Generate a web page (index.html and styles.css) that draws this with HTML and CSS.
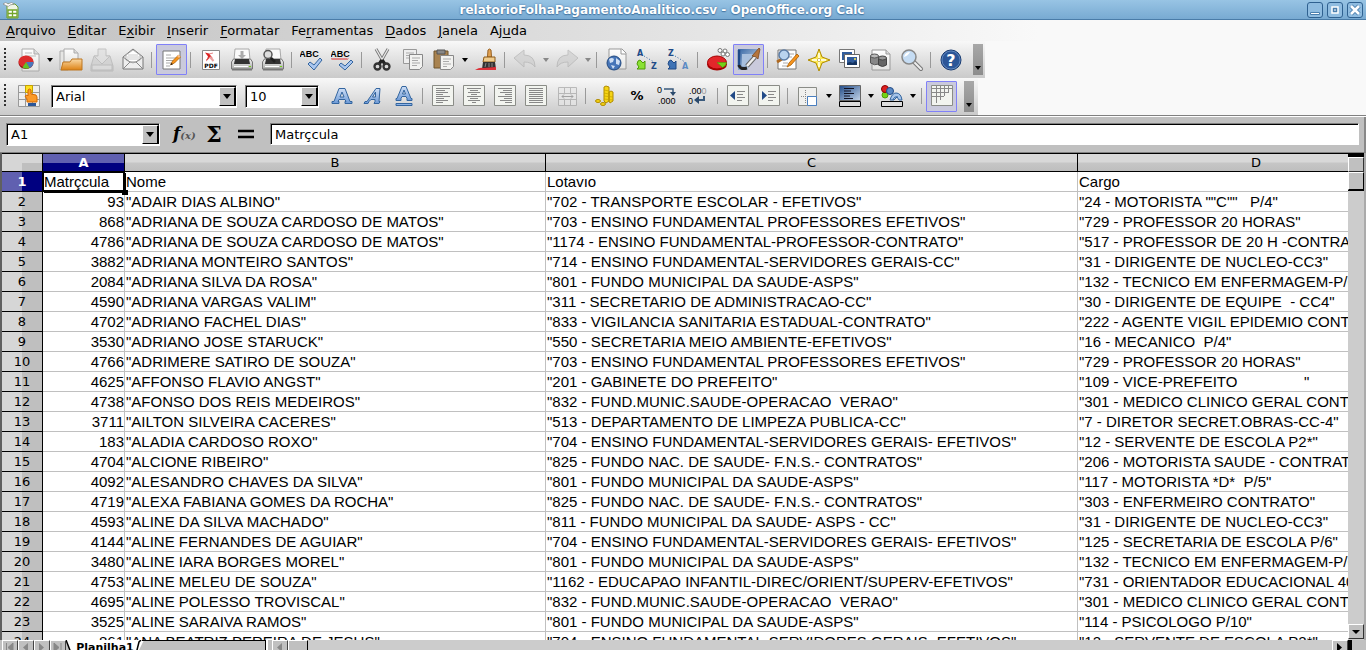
FILE: index.html
```html
<!DOCTYPE html>
<html lang="pt-BR">
<head>
<meta charset="utf-8">
<title>relatorioFolhaPagamentoAnalitico.csv - OpenOffice.org Calc</title>
<link rel="stylesheet" href="styles.css">
</head>
<body>
<svg class="defs" aria-hidden="true">
<defs>
<linearGradient id="blue" x1="0" y1="0" x2="0" y2="1"><stop offset="0" stop-color="#cfdff6"/><stop offset="1" stop-color="#6d9ad6"/></linearGradient>
<linearGradient id="deep" x1="0" y1="0" x2="1" y2="1"><stop offset="0" stop-color="#204a87"/><stop offset="1" stop-color="#c4d5ea"/></linearGradient>
<linearGradient id="side" x1="0" y1="0" x2="1" y2="1"><stop offset="0" stop-color="#3465a4"/><stop offset="1" stop-color="#e4ecf5"/></linearGradient>
<linearGradient id="orange" x1="0" y1="0" x2="0" y2="1"><stop offset="0" stop-color="#f9d9a5"/><stop offset="1" stop-color="#dd8214"/></linearGradient>
<linearGradient id="paper" x1="0" y1="0" x2="0" y2="1"><stop offset="0" stop-color="#fff"/><stop offset="1" stop-color="#e4e4e2"/></linearGradient>
<linearGradient id="metal" x1="0" y1="0" x2="0" y2="1"><stop offset="0" stop-color="#f6f6f6"/><stop offset="1" stop-color="#a9aba8"/></linearGradient>
</defs>
</svg>
<div class="app">
<header class="titlebar">
<svg class="appicon" viewBox="0 0 18 18"><path d="M5 3h8l3 3v11H5z" fill="#eef5e4" stroke="#6c9a2c"/><path d="M6 9h9v7H6zM6 12.500h9M10.500 9v7" fill="#fff" stroke="#73a52b" stroke-width="1.300"/><path d="M1 3q3-3 5 0q4-3 6 0l-4 1q-1 2-3 1z" fill="#fff" stroke="#777" stroke-width=".6"/></svg>
<h1>relatorioFolhaPagamentoAnalitico.csv - OpenOffice.org Calc</h1>
<div class="winbtns">
<button aria-label="Minimizar"><svg viewBox="0 0 14 14"><path d="M2.500 9.500h9v2h-9z" fill="#fff" stroke="#4a7fae"/></svg></button>
<button aria-label="Maximizar"><svg viewBox="0 0 14 14"><path d="M4 4h6v6H4z" fill="#4a7fae" stroke="#fff" stroke-width="1.500"/><path d="M6 6.500h2v1H6z" fill="#fff"/></svg></button>
<button aria-label="Fechar"><svg viewBox="0 0 14 14"><path d="M3 3l8 8M11 3l-8 8" stroke="#4a7fae" stroke-width="4.500"/><path d="M3 3l8 8M11 3l-8 8" stroke="#fff" stroke-width="2.600"/></svg></button>
</div>
</header>
<nav class="menubar">
<button><u>A</u>rquivo</button><button><u>E</u>ditar</button><button>E<u>x</u>ibir</button><button><u>I</u>nserir</button><button><u>F</u>ormatar</button><button>Fe<u>r</u>ramentas</button><button><u>D</u>ados</button><button><u>J</u>anela</button><button>Aj<u>u</u>da</button>
</nav>
<div class="toolbar" role="toolbar" aria-label="Padrão">
<span class="grip"></span>
<button class="tool" aria-label="Novo"><svg viewBox="0 0 24 24"><path d="M5 1h12l5 5v17H5z" fill="url(#paper)" stroke="#aaa"/><path d="M17 1v5h5" fill="#ddd" stroke="#aaa"/><path d="M8 5h7M8 8h11" stroke="#bbb"/><ellipse cx="9" cy="15" rx="7.500" ry="6" fill="#8c1010"/><ellipse cx="9" cy="13.500" rx="7.500" ry="6" fill="#dd2c2c"/><path d="M9 14h7.500q0 4-4 6z" fill="#4b77bb"/><path d="M9 14l3.500 6q-4 1.500-7-.5z" fill="#62c226"/></svg></button><button class="drop" aria-label="Mais opções"></button>
<button class="tool" aria-label="Abrir"><svg viewBox="0 0 24 24"><path d="M1 22V3h6l2 2v17z" fill="#e6e6e4" stroke="#aaa"/><path d="M5 14V1h10l4 4v10z" fill="url(#paper)" stroke="#aaa"/><path d="M15 1v4h4" fill="#ddd" stroke="#aaa"/><path d="M2 22l2-8h7l2-3h10v11z" fill="url(#orange)" stroke="#bd7621"/></svg></button>
<button class="tool dim" aria-label="Salvar"><svg viewBox="0 0 24 24"><path d="M4 8h16l3 10v5H1v-5z" fill="#ccc" stroke="#aaa"/><path d="M2 17h20v5H2z" fill="#ddd" stroke="#aaa"/><path d="M8 1h8v7h4l-8 8-8-8h4z" fill="#ddd" stroke="#aaa"/></svg></button>
<button class="tool" aria-label="E-mail"><svg viewBox="0 0 24 24"><path d="M2 9l10-8 10 8v12H2z" fill="#eee" stroke="#777"/><path d="M5 7l7-5 7 5v5l-7 3-7-3z" fill="#fff" stroke="#999" stroke-width=".7"/><path d="M7 7h10M6 9h12M6 11h12" stroke="#ccc"/><path d="M2 9l7 5h6l7-5M2 21l7-7M22 21l-7-7" fill="none" stroke="#888"/></svg></button>
<span class="sep"></span>
<button class="tool on" aria-label="Editar arquivo"><svg viewBox="0 0 24 24"><path d="M3 3h17v18H3z" fill="#fff" stroke="#777"/><path d="M6 7h5M6 10h11M6 12.500h9M6 15h6M6 18h4" stroke="#aaa"/><path d="M10.500 17l2-4 6-6 2 2-6 6z" fill="#f7941d" stroke="#a65b00" stroke-width=".7"/><path d="M10.500 17l1-2 1.500 1.200z" fill="#111"/><path d="M17 8l2 2 1.500-1.500-2-2z" fill="#f8c08a"/></svg></button>
<span class="sep"></span>
<button class="tool" aria-label="Exportar PDF"><svg viewBox="0 0 24 24"><path d="M3.500 2.500h17v19h-17z" fill="#fff" stroke="#888"/><path d="M6 4.500l4 1 4 5-3-1-4 4 2-5z" fill="#d22"/><path d="M10 6l4-1M7 12l4-3" stroke="#d66" stroke-width=".8"/><path d="M11 9l3.500 4" stroke="#e9a0a0" stroke-width="2"/><text x="12" y="20" class="t-pdf">PDF</text></svg></button>
<button class="tool" aria-label="Imprimir"><svg viewBox="0 0 24 24"><path d="M4 12l1-11h14l1 11z" fill="#fafafa" stroke="#aaa"/><path d="M10.500 3h3v4h2.500l-4 4-4-4h2.500z" fill="#aaa"/><path d="M1.500 14l2-3h17l2 3v7h-21z" fill="url(#metal)" stroke="#777"/><path d="M5 11h14l1 5H4z" fill="#333"/><path d="M4 18h14v1H4z" fill="#fff"/><path d="M19 18h2v1h-2z" fill="#73d216"/><path d="M2 21h20v1.500H2z" fill="#777"/></svg></button>
<button class="tool" aria-label="Visualizar página"><svg viewBox="0 0 24 24"><path d="M4 12l1-11h14l1 11z" fill="#fafafa" stroke="#aaa"/><path d="M1.500 14l2-3h17l2 3v7h-21z" fill="url(#metal)" stroke="#777"/><path d="M5 11h14l1 5H4z" fill="#333"/><path d="M4 18h14v1H4z" fill="#fff"/><path d="M19 18h2v1h-2z" fill="#73d216"/><path d="M2 21h20v1.500H2z" fill="#777"/><path d="M9 9l5 5" stroke="#222" stroke-width="2.500"/><circle cx="7" cy="6.500" r="4" fill="#ddd" stroke="#555" stroke-width="1.500"/></svg></button>
<span class="sep"></span>
<button class="tool" aria-label="Ortografia"><svg viewBox="0 0 24 24"><text x="9" y="9" class="t-abc">ABC</text><path d="M8 16l2-2 4 3 6-7 2 2-8 10z" fill="#a9c6ef" stroke="#33659f"/></svg></button>
<button class="tool" aria-label="Verificação automática"><svg viewBox="0 0 24 24"><text x="9" y="9" class="t-abc">ABC</text><path d="M0 11.500l1-1 1 1 1-1 1 1 1-1 1 1 1-1 1 1 1-1 1 1 1-1 1 1 1-1 1 1 1-1 1 1 1-1" fill="none" stroke="#d11"/><path d="M8 17l2-2 4 3 6-6 2 2-8 8z" fill="#a9c6ef" stroke="#33659f"/></svg></button>
<span class="sep"></span>
<button class="tool" aria-label="Cortar"><svg viewBox="0 0 24 24"><path d="M6 1l8 14M18 1l-8 14" stroke="#777" stroke-width="3"/><path d="M6 1l8 14M18 1l-8 14" stroke="#e8e8e8" stroke-width="1.300"/><path d="M12 12l-3 4M12 12l3 4" stroke="#222" stroke-width="3"/><ellipse cx="7.500" cy="18.500" rx="3" ry="3" fill="none" stroke="#333" stroke-width="2.300"/><ellipse cx="16.500" cy="18.500" rx="3" ry="3" fill="none" stroke="#333" stroke-width="2.300"/></svg></button>
<button class="tool" aria-label="Copiar"><svg viewBox="0 0 24 24"><path d="M2.500 1.500h13v14h-13z" fill="#eee" stroke="#999"/><path d="M5 5h8M5 7.500h6M5 10h3" stroke="#aaa"/><path d="M8.500 6.500h13v12l-3 3h-10z" fill="#f2f2f0" stroke="#888"/><path d="M11 10h8M11 12.500h6M11 15h8M11 17.500h5" stroke="#aaa"/></svg></button>
<button class="tool" aria-label="Colar"><svg viewBox="0 0 24 24"><path d="M2 3h14v17H2z" fill="#a98350" stroke="#6f542c"/><path d="M5 2h8v4H5z" fill="#888" stroke="#555"/><path d="M8.500 7.500h13v11l-3 3h-10z" fill="#f2f2f0" stroke="#888"/><path d="M11 11h8M11 13.500h6M11 16h8M11 18.500h4" stroke="#aaa"/></svg></button><button class="drop" aria-label="Mais opções"></button>
<button class="tool" aria-label="Pincel de estilo"><svg viewBox="0 0 24 24"><path d="M13.500 9l.5-7q1.500-2 3 0l.5 7z" fill="#e2a253" stroke="#966022"/><path d="M10 9h11v5H9z" fill="#f0cd8f" stroke="#8d5a1a"/><path d="M9 14h12l1 7H8z" fill="#333"/><path d="M12 15l-1 4M15 15v4M18 15v4" stroke="#888"/><path d="M1 22q5-3 8-2l13-1v3z" fill="#dc3038"/></svg></button>
<span class="sep"></span>
<button class="tool dim" aria-label="Desfazer"><svg viewBox="0 0 24 24"><path d="M1 10l10-8v5q11 0 11 12q-3-5-11-5v5z" fill="#ccc" stroke="#aaa"/></svg></button><button class="drop off" aria-label="Mais opções"></button>
<button class="tool dim" aria-label="Refazer"><svg viewBox="0 0 24 24"><path d="M23 10L13 2v5q-11 0-11 12q3-5 11-5v5z" fill="#ccc" stroke="#aaa"/></svg></button><button class="drop off" aria-label="Mais opções"></button>
<span class="sep"></span>
<button class="tool" aria-label="Hiperlink"><svg viewBox="0 0 24 24"><path d="M4 1h13l4 4v16H4z" fill="url(#paper)" stroke="#999"/><path d="M16 1v5h5" fill="#fff" stroke="#999"/><circle cx="9" cy="15" r="7" fill="#4675b8" stroke="#22497f"/><path d="M4 11q3-2 5 0l-1 3-3 1zM11 10l4 3-1 4-3-1zM6 17l4 1-2 3z" fill="#cfdff4"/></svg></button>
<button class="tool" aria-label="Ordem crescente"><svg viewBox="0 0 24 24"><text x="4" y="7.500" class="t-sort">A</text><text x="18" y="21" class="t-sort">Z</text><path d="M8 8l10 6" stroke="#3465a4" stroke-dasharray="1 2"/><path d="M2 13l2-1 3 3 2-2v8H1l2-2-2-3z" fill="#8ae234" stroke="#4e9a06"/></svg></button>
<button class="tool" aria-label="Ordem decrescente"><svg viewBox="0 0 24 24"><text x="4" y="7.500" class="t-sort">Z</text><text x="18" y="21" class="t-sort pale">A</text><path d="M8 8l10 6" stroke="#3465a4" stroke-dasharray="1 2"/><path d="M2 13l2-1 3 3 2-2v8H1l2-2-2-3z" fill="#3f73b5" stroke="#204a87"/></svg></button>
<span class="sep"></span>
<button class="tool" aria-label="Gráfico"><svg viewBox="0 0 24 24"><ellipse cx="11" cy="16.500" rx="10" ry="6" fill="#a40000"/><ellipse cx="11" cy="14.500" rx="9.500" ry="6.500" fill="#e3262a" stroke="#a40000"/><path d="M11 14.500h9.500q0 3-4 5z" fill="#73d216" stroke="#4e9a06" stroke-width=".6"/><g fill="#fff" stroke="#777"><circle cx="14" cy="2.500" r="2"/><circle cx="19" cy="3" r="2"/><circle cx="17" cy="6" r="2"/><circle cx="21.500" cy="6.500" r="2"/></g></svg></button>
<button class="tool on" aria-label="Mostrar funções de desenho"><svg viewBox="0 0 24 24"><path d="M1 1h22L10 22H1z" fill="url(#side)"/><path d="M5 6h14L7 18H5z" fill="#a9c0de"/><path d="M2 2v17" stroke="#204a87" stroke-width="2.500"/><path d="M2 17q1 5 8 3" fill="none" stroke="#222" stroke-width="3"/><path d="M10 18l8-9" stroke="#666" stroke-width="4.500"/><path d="M10 18l8-9" stroke="#eee" stroke-width="2.500"/><path d="M15 8L22 0l1 1-2 10q-2-3-6-3z" fill="#b5753c" stroke="#764012" stroke-width=".7"/></svg></button>
<span class="sep"></span>
<button class="tool" aria-label="Localizar"><svg viewBox="0 0 24 24"><path d="M2 2h18v19H2z" fill="#fff" stroke="#777"/><path d="M12 6h6M12 9h4M7 15h5M6 18h5" stroke="#aaa"/><path d="M1 14l5-3" stroke="#b06a20" stroke-width="3"/><circle cx="8" cy="7" r="5" fill="#b9d3ee" stroke="#5c7ca5" stroke-width="1.500"/><path d="M11 19l2-4 8-9 2 2-8 9z" fill="#f7941d" stroke="#a65b00" stroke-width=".8"/></svg></button>
<button class="tool" aria-label="Navegador"><svg viewBox="0 0 24 24"><path d="M12 1l3 8 8 3-8 3-3 8-3-8-8-3 8-3z" fill="#fce94f" stroke="#b08b00" stroke-linejoin="round"/><path d="M12 5v14M5 12h14" stroke="#fffbd0" stroke-width="2"/><path d="M12 10l2 2-2 2-2-2z" fill="#fff" stroke="#b08b00" stroke-width=".6"/></svg></button>
<button class="tool" aria-label="Galeria"><svg viewBox="0 0 24 24"><path d="M1.500 1.500h15v13h-15z" fill="#fff" stroke="#777"/><path d="M4 4h10v8H4z" fill="#315c9b"/><path d="M6.500 6.500h15v13h-15z" fill="#fff" stroke="#666"/><path d="M9 9h10v8H9z" fill="#315c9b"/><path d="M9 15l3-1 3 1 2-2 2 1v3H9z" fill="#153461"/><circle cx="17" cy="11" r="1" fill="#fce94f"/></svg></button>
<button class="tool" aria-label="Fontes de dados"><svg viewBox="0 0 24 24"><path d="M3 2h14l4 4v16H3z" fill="url(#paper)" stroke="#999"/><path d="M17 2v4h4" fill="#ddd" stroke="#999"/><path d="M1.500 8v7q4 3 8 1V8z" fill="#888" stroke="#555"/><ellipse cx="5.500" cy="8" rx="4" ry="2" fill="#bbb" stroke="#555"/><path d="M9.500 10v7q4 3 8 0v-7z" fill="#666" stroke="#444"/><ellipse cx="13.500" cy="10" rx="4" ry="2" fill="#999" stroke="#444"/></svg></button>
<button class="tool" aria-label="Zoom"><svg viewBox="0 0 24 24"><path d="M14 14l7 7" stroke="#777" stroke-width="4" stroke-linecap="round"/><path d="M14 14l7 7" stroke="#eee" stroke-width="2" stroke-linecap="round"/><circle cx="9" cy="9" r="7" fill="#c5dcf3" stroke="#888" stroke-width="1.500"/><path d="M4 9q1-5 6-5q-2 4-6 5z" fill="#fff"/></svg></button>
<span class="sep"></span>
<button class="tool" aria-label="Ajuda"><svg viewBox="0 0 24 24"><circle cx="12" cy="12" r="10" fill="#2c5698" stroke="#173a70"/><circle cx="12" cy="12" r="9" fill="none" stroke="#6f93c7" stroke-width=".8"/><text x="12" y="18" class="t-help">?</text></svg></button>
<button class="more" aria-label="Mais botões"></button>
</div>
<div class="toolbar fmt" role="toolbar" aria-label="Formatação">
<span class="grip"></span>
<button class="tool" aria-label="Estilos"><svg viewBox="0 0 24 24"><path d="M1.500 1.500h21v21h-21zM1.500 8.500h21M1.500 15.500h21M8.500 1.500v21M15.500 1.500v21" fill="#eee" stroke="#999"/><path d="M8.500 1.500h7v7h-7z" fill="#fce020" stroke="#c4a000"/><path d="M10 18v-3l-2-3 2-1 1 1V6q1.500-2 3 0v4l5 1 1 2v5z" fill="#fb9a28" stroke="#d66a00"/><path d="M11 19h8v3h-8z" fill="#2c5698"/></svg></button>
<label class="combo font"><select aria-label="Nome da fonte"><option>Arial</option></select><span class="arrow"></span></label>
<label class="combo size"><select aria-label="Tamanho da fonte"><option>10</option></select><span class="arrow"></span></label>
<button class="tool" aria-label="Negrito"><svg viewBox="0 0 24 24"><path d="M2 19.500v-2h2l5-13h6l5 13h2v2h-7v-2h1l-1-2H9l-1 2h1v2zM10 13h4l-2-5z" fill="url(#blue)" stroke="#33659f" fill-rule="evenodd"/></svg></button>
<button class="tool" aria-label="Itálico"><svg viewBox="0 0 24 24"><path d="M3 19.500l1-2h2l9-13h4l-1 13h1l-1 2h-5l1-2v-2h-4l-2 2-1 2zM11.500 13h3V8z" fill="url(#blue)" stroke="#33659f" fill-rule="evenodd"/></svg></button>
<button class="tool" aria-label="Sublinhado"><svg viewBox="0 0 24 24"><path d="M4 16.500v-2h1l5-12h4l5 12h1v2h-5v-2l-1-2h-4l-1 2v2zM10.500 10h3l-1.500-4z" fill="url(#blue)" stroke="#33659f" fill-rule="evenodd"/><path d="M4 19.500h16v2H4z" fill="#8db3e6" stroke="#33659f"/></svg></button>
<span class="sep"></span>
<button class="tool" aria-label="Alinhar à esquerda"><svg viewBox="0 0 24 24"><path d="M1.500 1.500h21v20h-21z" fill="#f2f4ef" stroke="#8a8c87"/><path d="M5 4.500h14M5 6.500h9M5 8.500h12M5 10.500h7M5 12.500h14M5 14.500h8M5 16.500h12M5 18.500h7" stroke="#888"/></svg></button>
<button class="tool" aria-label="Centralizar"><svg viewBox="0 0 24 24"><path d="M1.500 1.500h21v20h-21z" fill="#f2f4ef" stroke="#8a8c87"/><path d="M5 4.500h14M8 6.500h8M6 8.500h12M9 10.500h6M5 12.500h14M8 14.500h8M6 16.500h12M10 18.500h4" stroke="#888"/></svg></button>
<button class="tool" aria-label="Alinhar à direita"><svg viewBox="0 0 24 24"><path d="M1.500 1.500h21v20h-21z" fill="#f2f4ef" stroke="#8a8c87"/><path d="M5 4.500h14M10 6.500h9M7 8.500h12M12 10.500h7M5 12.500h14M11 14.500h8M7 16.500h12M12 18.500h7" stroke="#888"/></svg></button>
<button class="tool" aria-label="Justificar"><svg viewBox="0 0 24 24"><path d="M1.500 1.500h21v20h-21z" fill="#f2f4ef" stroke="#8a8c87"/><path d="M5 4.500h14M5 6.500h14M5 8.500h14M5 10.500h14M5 12.500h14M5 14.500h14M5 16.500h14M5 18.500h14" stroke="#888"/></svg></button>
<button class="tool dim" aria-label="Mesclar células"><svg viewBox="0 0 24 24"><path d="M3.500 3.500h18v18h-18zM3.500 9.500h18M3.500 15.500h18M9.500 3.500v6M15.500 3.500v6M9.500 15.500v6M15.500 15.500v6" fill="#e8e8e8" stroke="#999"/><path d="M7 12.500h11M9 10.500l-2 2 2 2M16 10.500l2 2-2 2" fill="none" stroke="#777"/></svg></button>
<span class="sep"></span>
<button class="tool" aria-label="Moeda"><svg viewBox="0 0 24 24"><path d="M10 3l2-1 3 1v14l-3 2-2-2zM15 8l2-1 2 1v9l-3 2-1-2z" fill="#f5d415" stroke="#b08b00"/><path d="M10 6l5 1M10 9l5 1M10 12l9 1M10 15l9 1" stroke="#c4a000" stroke-width=".7"/><g fill="#f5d415" stroke="#b08b00"><ellipse cx="4" cy="17" rx="2.500" ry="1.500"/><ellipse cx="9" cy="20" rx="2.500" ry="1.500"/></g></svg></button>
<button class="tool" aria-label="Porcentagem"><svg viewBox="0 0 24 24"><text x="12" y="16" class="t-pct">%</text></svg></button>
<button class="tool" aria-label="Adicionar casa decimal"><svg viewBox="0 0 24 24"><text x="1" y="9" class="t-num">0</text><text x="2" y="20" class="t-num">.000</text><path d="M8 5h9v4" fill="none" stroke="#3a5a7c" stroke-width="1.500"/><path d="M14 8h6l-3 4z" fill="#2b4a6c"/></svg></button>
<button class="tool" aria-label="Excluir casa decimal"><svg viewBox="0 0 24 24"><text x="2" y="10" class="t-num">.00<tspan fill="#999">0</tspan></text><text x="1" y="20" class="t-num">0</text><path d="M10 16h7v-4" fill="none" stroke="#3a5a7c" stroke-width="2"/><path d="M12 12v8l-5-4z" fill="#2b4a6c"/></svg></button>
<span class="sep"></span>
<button class="tool" aria-label="Diminuir recuo"><svg viewBox="0 0 24 24"><path d="M1.500 1.500h21v20h-21z" fill="#f2f4ef" stroke="#8a8c87"/><path d="M9 7v9l-5-4.500z" fill="#204a87"/><path d="M11 7.500h8M11 10.500h6M11 13.500h8M11 16.500h5" stroke="#888"/></svg></button>
<button class="tool" aria-label="Aumentar recuo"><svg viewBox="0 0 24 24"><path d="M1.500 1.500h21v20h-21z" fill="#f2f4ef" stroke="#8a8c87"/><path d="M5 7v9l5-4.500z" fill="#204a87"/><path d="M11 7.500h8M11 10.500h6M11 13.500h8M11 16.500h5" stroke="#888"/></svg></button>
<span class="sep"></span>
<button class="tool" aria-label="Bordas"><svg viewBox="0 0 24 24"><path d="M2.500 3.500h18v18h-18z" fill="#f0f0ee" stroke="#8a8c87"/><path d="M9.500 6v13M5 12.500h14" stroke="#888" stroke-dasharray="1 1"/><path d="M11.500 12.500h9v9h-9z" fill="#fff" stroke="#4a7fc0"/></svg></button><button class="drop" aria-label="Mais opções"></button>
<button class="tool" aria-label="Cor do plano de fundo"><svg viewBox="0 0 24 24"><path d="M1.500 1.500h21v15h-21z" fill="url(#deep)" stroke="#666"/><path d="M6 4.500h10M6 7h7M6 9.500h10M6 12h6M6 14.500h9" stroke="#112"/><path d="M1.500 17.500h21v5h-21z" fill="#ddd" stroke="#000"/></svg></button><button class="drop" aria-label="Mais opções"></button>
<button class="tool" aria-label="Cor da fonte"><svg viewBox="0 0 24 24"><circle cx="5" cy="11" r="3" fill="#73d216" stroke="#4e9a06"/><circle cx="5" cy="5" r="3.500" fill="#dc2020" stroke="#8a0000"/><circle cx="10" cy="7" r="3.500" fill="#5b8ac4" stroke="#204a87"/><path d="M10 16q2-7 6-7q5 0 6 7h-3l-2-3-3 3z" fill="#a6c4e9" stroke="#33659f"/><path d="M13 16q1-4 5-3" fill="none" stroke="#33659f"/><path d="M1.500 17.500h21v5h-21z" fill="#ddd" stroke="#000"/></svg></button><button class="drop" aria-label="Mais opções"></button>
<span class="sep"></span>
<button class="tool on" aria-label="Linhas de grade"><svg viewBox="0 0 24 24"><path d="M1.500 1.500h21v20h-21z" fill="#f2f4ef" stroke="#8a8c87"/><path d="M2 4.500h20M2 8.500h17M2 12.500h12M6.500 2v17M10.500 2v14M14.500 2v10M18.500 2v6" stroke="#888"/></svg></button>
<button class="more" aria-label="Mais botões"></button>
</div>
<div class="formulabar">
<label class="combo name"><input type="text" value="A1" aria-label="Caixa de nome"><span class="arrow"></span></label>
<button class="fx" aria-label="Assistente de funções"><i>f</i><small>(x)</small></button>
<button class="sum" aria-label="Soma">Σ</button>
<button class="eq" aria-label="Função"><svg viewBox="0 0 18 10"><path d="M1 2h16M1 8h16" stroke="#000" stroke-width="2.400"/></svg></button>
<input class="line" type="text" value="Matrçcula" aria-label="Linha de entrada">
</div>
<main class="work">
<div class="grid">
<table>
<colgroup><col class="ch"><col class="ca"><col class="cb"><col class="cc"><col class="cd"></colgroup>
<thead><tr><th class="corner"></th><th class="sel">A</th><th>B</th><th>C</th><th>D</th></tr></thead>
<tbody>
<tr class="first"><th class="sel">1</th><td class="active">Matrçcula</td><td>Nome</td><td>Lotavıo</td><td>Cargo</td></tr>
<tr><th>2</th><td>93</td><td>"ADAIR DIAS ALBINO"</td><td>"702 - TRANSPORTE ESCOLAR - EFETIVOS"</td><td>"24 - MOTORISTA ""C""   P/4"</td></tr>
<tr><th>3</th><td>868</td><td>"ADRIANA DE SOUZA CARDOSO DE MATOS"</td><td>"703 - ENSINO FUNDAMENTAL PROFESSORES EFETIVOS"</td><td>"729 - PROFESSOR 20 HORAS"</td></tr>
<tr><th>4</th><td>4786</td><td>"ADRIANA DE SOUZA CARDOSO DE MATOS"</td><td>"1174 - ENSINO FUNDAMENTAL-PROFESSOR-CONTRATO"</td><td>"517 - PROFESSOR DE 20 H -CONTRATO"</td></tr>
<tr><th>5</th><td>3882</td><td>"ADRIANA MONTEIRO SANTOS"</td><td>"714 - ENSINO FUNDAMENTAL-SERVIDORES GERAIS-CC"</td><td>"31 - DIRIGENTE DE NUCLEO-CC3"</td></tr>
<tr><th>6</th><td>2084</td><td>"ADRIANA SILVA DA ROSA"</td><td>"801 - FUNDO MUNICIPAL DA SAUDE-ASPS"</td><td>"132 - TECNICO EM ENFERMAGEM-P/6"</td></tr>
<tr><th>7</th><td>4590</td><td>"ADRIANA VARGAS VALIM"</td><td>"311 - SECRETARIO DE ADMINISTRACAO-CC"</td><td>"30 - DIRIGENTE DE EQUIPE  - CC4"</td></tr>
<tr><th>8</th><td>4702</td><td>"ADRIANO FACHEL DIAS"</td><td>"833 - VIGILANCIA SANITARIA ESTADUAL-CONTRATO"</td><td>"222 - AGENTE VIGIL EPIDEMIO CONTRATO"</td></tr>
<tr><th>9</th><td>3530</td><td>"ADRIANO JOSE STARUCK"</td><td>"550 - SECRETARIA MEIO AMBIENTE-EFETIVOS"</td><td>"16 - MECANICO  P/4"</td></tr>
<tr><th>10</th><td>4766</td><td>"ADRIMERE SATIRO DE SOUZA"</td><td>"703 - ENSINO FUNDAMENTAL PROFESSORES EFETIVOS"</td><td>"729 - PROFESSOR 20 HORAS"</td></tr>
<tr><th>11</th><td>4625</td><td>"AFFONSO FLAVIO ANGST"</td><td>"201 - GABINETE DO PREFEITO"</td><td>"109 - VICE-PREFEITO                "</td></tr>
<tr><th>12</th><td>4738</td><td>"AFONSO DOS REIS MEDEIROS"</td><td>"832 - FUND.MUNIC.SAUDE-OPERACAO  VERAO"</td><td>"301 - MEDICO CLINICO GERAL CONTRATO"</td></tr>
<tr><th>13</th><td>3711</td><td>"AILTON SILVEIRA CACERES"</td><td>"513 - DEPARTAMENTO DE LIMPEZA PUBLICA-CC"</td><td>"7 - DIRETOR SECRET.OBRAS-CC-4"</td></tr>
<tr><th>14</th><td>183</td><td>"ALADIA CARDOSO ROXO"</td><td>"704 - ENSINO FUNDAMENTAL-SERVIDORES GERAIS- EFETIVOS"</td><td>"12 - SERVENTE DE ESCOLA P2*"</td></tr>
<tr><th>15</th><td>4704</td><td>"ALCIONE RIBEIRO"</td><td>"825 - FUNDO NAC. DE SAUDE- F.N.S.- CONTRATOS"</td><td>"206 - MOTORISTA SAUDE - CONTRATO"</td></tr>
<tr><th>16</th><td>4092</td><td>"ALESANDRO CHAVES DA SILVA"</td><td>"801 - FUNDO MUNICIPAL DA SAUDE-ASPS"</td><td>"117 - MOTORISTA *D*  P/5"</td></tr>
<tr><th>17</th><td>4719</td><td>"ALEXA FABIANA GOMES DA ROCHA"</td><td>"825 - FUNDO NAC. DE SAUDE- F.N.S.- CONTRATOS"</td><td>"303 - ENFERMEIRO CONTRATO"</td></tr>
<tr><th>18</th><td>4593</td><td>"ALINE DA SILVA MACHADO"</td><td>"811 - FUNDO MUNICIPAL DA SAUDE- ASPS - CC"</td><td>"31 - DIRIGENTE DE NUCLEO-CC3"</td></tr>
<tr><th>19</th><td>4144</td><td>"ALINE FERNANDES DE AGUIAR"</td><td>"704 - ENSINO FUNDAMENTAL-SERVIDORES GERAIS- EFETIVOS"</td><td>"125 - SECRETARIA DE ESCOLA P/6"</td></tr>
<tr><th>20</th><td>3480</td><td>"ALINE IARA BORGES MOREL"</td><td>"801 - FUNDO MUNICIPAL DA SAUDE-ASPS"</td><td>"132 - TECNICO EM ENFERMAGEM-P/6"</td></tr>
<tr><th>21</th><td>4753</td><td>"ALINE MELEU DE SOUZA"</td><td>"1162 - EDUCAPAO INFANTIL-DIREC/ORIENT/SUPERV-EFETIVOS"</td><td>"731 - ORIENTADOR EDUCACIONAL 40 H"</td></tr>
<tr><th>22</th><td>4695</td><td>"ALINE POLESSO TROVISCAL"</td><td>"832 - FUND.MUNIC.SAUDE-OPERACAO  VERAO"</td><td>"301 - MEDICO CLINICO GERAL CONTRATO"</td></tr>
<tr><th>23</th><td>3525</td><td>"ALINE SARAIVA RAMOS"</td><td>"801 - FUNDO MUNICIPAL DA SAUDE-ASPS"</td><td>"114 - PSICOLOGO P/10"</td></tr>
<tr><th>24</th><td>861</td><td>"ANA BEATRIZ PEREIRA DE JESUS"</td><td>"704 - ENSINO FUNDAMENTAL-SERVIDORES GERAIS- EFETIVOS"</td><td>"12 - SERVENTE DE ESCOLA P2*"</td></tr>
</tbody>
</table>
</div>
<div class="vscroll"><button class="sb up" aria-label="Rolar para cima"></button><span class="thumb"></span><button class="sb down" aria-label="Rolar para baixo"></button></div>
</main>
<footer class="tabs">
<button class="nav" aria-label="Primeira planilha"><svg viewBox="0 0 13 14"><path d="M3.500 2v9M10 2v9L5 6.500z" stroke="#888" fill="#888"/></svg></button>
<button class="nav" aria-label="Planilha anterior"><svg viewBox="0 0 13 14"><path d="M9 2v9L4 6.500z" fill="#888"/></svg></button>
<button class="nav" aria-label="Próxima planilha"><svg viewBox="0 0 13 14"><path d="M4 2v9l5-4.500z" fill="#888"/></svg></button>
<button class="nav" aria-label="Última planilha"><svg viewBox="0 0 13 14"><path d="M3 2v9l5-4.500zM10 2v9" stroke="#888" fill="#888"/></svg></button>
<button class="tab"><svg viewBox="0 0 78 18"><path d="M0 0l7 18h62l9-18z" fill="#fff"/><path d="M0 0l7 18M69 18l4-16 2-2" fill="none" stroke="#000" stroke-width="1.500"/></svg><b>Planilha1</b></button>
<span class="rest"></span>
<span class="split"></span>
<button class="nav" aria-label="Rolar para a esquerda"><svg viewBox="0 0 13 14"><path d="M9 2v9L4 6.500z" fill="#888"/></svg></button>
<span class="hthumb"></span>
<span class="track"></span>
<button class="nav" aria-label="Rolar para a direita"><svg viewBox="0 0 13 14"><path d="M4 2v9l5-4.500z" fill="#000"/></svg></button>
<span class="end"></span>
</footer>
</div>
</body>
</html>
```
FILE: styles.css
```css
* { box-sizing: border-box; }
body { margin: 0; background: #c0c0c0; color: #000; font: 13px "DejaVu Sans", sans-serif; }
button, input, select { margin: 0; padding: 0; border: 0; border-radius: 0; background: none; color: inherit; font: inherit; }
.defs { position: absolute; width: 0; height: 0; }
.app { display: flex; flex-direction: column; height: 100vh; overflow: hidden; }

.titlebar { display: grid; grid-template-columns: 20px 1fr 62px; align-items: center; flex: none; height: 20px; background: linear-gradient(#98c4e4, #78aad2); border-bottom: 1px solid #4a7ca8; }
.titlebar h1 { margin: 0; color: #fff; font-size: 12px; font-weight: bold; line-height: 18px; text-align: center; white-space: nowrap; text-shadow: 0 0 2px #3c6c9c, 0 1px 1px #4a7ca8; }
.appicon { width: 18px; height: 18px; margin-left: 2px; }
.winbtns { display: flex; gap: 4px; padding-left: 3px; }
.winbtns button { width: 16px; height: 16px; border: 1px solid #2f6190; border-radius: 3px; background: #8fbce0; }
.winbtns svg { display: block; width: 14px; height: 14px; }

.menubar { display: flex; gap: 12px; flex: none; height: 21px; padding-left: 6px; background: linear-gradient(90deg, #c2c2c2, #e0e0e0 45%, #f9f9f9 76%); }
.menubar button { line-height: 21px; }
.menubar u { text-underline-offset: 2px; }

.toolbar { display: flex; align-items: center; flex: none; height: 37px; background: linear-gradient(#f8f8f8, #cacaca) 0 0 / 985px 100% no-repeat #f9f9f9; }
.fmt { height: 39px; padding-bottom: 2px; background: linear-gradient(#f8f8f8, #cacaca) 0 0 / 978px 37px no-repeat #f9f9f9; border-bottom: 1px solid #fff; box-shadow: inset 0 -1px #808080; }
.grip { flex: none; width: 2px; height: 24px; margin: 0 7px 0 4px; background: repeating-linear-gradient(#333 0 2px, transparent 2px 4px); }
.tool { display: grid; place-items: center; flex: none; width: 31px; height: 31px; }
.tool svg { width: 24px; height: 24px; }
.tool.on { border: 1px solid #8080f8; border-radius: 1px; background: #cacadc; }
.dim { opacity: .6; }
.drop { flex: none; width: 11px; height: 24px; }
.drop::before, .arrow::before, .more::before, .sb::before { content: ""; display: block; width: 0; margin: 0 auto; border: 3px solid transparent; border-top: 4px solid #000; border-bottom: 0; }
.drop.off::before { border-top-color: #888; }
.sep { flex: none; width: 8px; height: 16px; background: linear-gradient(#999, #999) 3px 0 / 1px 100% no-repeat; }
.more { display: flex; align-items: flex-end; flex: none; width: 10px; height: 31px; margin-left: 7px; padding: 0 2px 5px; background: linear-gradient(#a8a8a8, #8c8c8c); }

.combo { display: flex; flex: none; height: 23px; border: 1px solid #808080; border-right-color: #fff; border-bottom-color: #fff; background: #fff; box-shadow: inset 1px 1px #000; padding: 1px 0 1px 4px; }
.combo select, .combo input { flex: 1; min-width: 0; appearance: none; outline: 0; }
.arrow { display: grid; align-items: center; width: 17px; border: 1px solid #fff; border-right: 2px solid #000; border-bottom-color: #000; background: #c0c0c0; }
.arrow::before { border-width: 5px 4px 0; }
.font { width: 186px; margin-left: 7px; }
.size { width: 74px; margin: 0 7px 0 8px; }
.name { width: 154px; }

.formulabar { display: flex; align-items: center; flex: none; height: 36px; padding: 0 5px 1px 6px; background: #c0c0c0; border-right: 2px solid #888; border-bottom: 1px solid #808080; }
.fx { display: flex; align-items: baseline; width: 22px; margin-left: 13px; font-family: "DejaVu Serif", serif; font-size: 17px; font-weight: bold; line-height: 24px; }
.fx small { color: #555; font-size: 10px; font-style: italic; }
.sum { width: 18px; margin-left: 10px; font-family: "DejaVu Serif", serif; font-size: 22px; font-weight: bold; line-height: 24px; }
.eq { width: 18px; margin: 0 15px 0 14px; }
.eq svg { display: block; width: 18px; height: 10px; }
.line { flex: 1; min-width: 0; height: 22px; padding-left: 4px; border: 1px solid #808080; border-right-color: #fff; border-bottom-color: #fff; outline: 0; background: #fff; box-shadow: inset 0 1px #000, inset 1px 0 #000; }

.work { display: flex; flex: 1; min-height: 0; border-left: 2px solid #606060; border-right: 2px solid #aaa; background: #ccc; }
.grid { flex: 1; min-width: 0; overflow: hidden; background: #fff; }
table { width: 1433px; border-spacing: 0; table-layout: fixed; }
.ch { width: 41px; }
.ca { width: 82px; }
.cb { width: 421px; }
.cc { width: 532px; }
.cd { width: 357px; }
th, td { height: 20px; padding: 0; overflow: hidden; white-space: pre; line-height: 19px; }
th { border-right: 1px solid #000; border-bottom: 1px solid #000; background: linear-gradient(90deg, #d6d6d6 20px, #bfbfbf 20px); font-weight: normal; }
thead th { height: 19px; border-top: 1px solid #000; line-height: 17px; background: linear-gradient(#d8d8d8 8px, #c6c6c6 9px, #bebebe); }
thead .corner { background: linear-gradient(#bfbfbf, #bfbfbf) 20px 9px no-repeat #d6d6d6; }
th.sel { color: #fff; font-weight: bold; background: linear-gradient(90deg, #6060b0 20px, #000080 20px); }
thead th.sel { background: linear-gradient(#6060b0 9px, #000080 9px); }
td { padding-left: 1px; border-right: 1px solid #c0c0c0; border-bottom: 1px solid #c0c0c0; font-family: "Liberation Sans", Arial, sans-serif; font-size: 15px; }
td:nth-child(2) { text-align: right; }
.first td:nth-child(2) { position: relative; overflow: visible; text-align: left; box-shadow: inset 0 0 0 1px #000, 1px 1px #000; border-color: #000; }
.active::after { content: ""; position: absolute; right: -4px; bottom: -4px; width: 6px; height: 5px; background: #000; }

.vscroll { display: flex; flex-direction: column; width: 16px; padding-bottom: 1px; border-top: 4px solid #000; background: #ccc; }
.sb { flex: none; height: 15px; border: 1px solid #fff; border-right-color: #333; border-bottom-color: #333; background: #c0c0c0; }
.sb::before { border-width: 4px 4px 0; }
.up::before { border-width: 0 4px 4px; border-bottom-color: #777; }
.thumb { height: 18px; border: 1px solid #fff; border-right-color: #000; border-bottom-color: #000; box-shadow: 0 1px #000; background: #c0c0c0; }
.down { margin-top: auto; }

.tabs { display: flex; flex: none; height: 10px; padding-left: 2px; overflow: hidden; background: #c0c0c0; }
.nav { flex: none; width: 16px; height: 16px; border: 1px solid #fff; border-right-color: #444; background: #c0c0c0; }
.nav svg { display: block; width: 13px; height: 14px; }
.tab { display: grid; flex: none; width: 76px; height: 18px; }
.tab svg, .tab b { grid-area: 1 / 1; width: 78px; height: 18px; }
.tab b { font-size: 11px; line-height: 15px; text-align: center; }
.rest { flex: none; width: 124px; border-top: 1px solid #000; border-right: 1px solid #000; }
.split { flex: none; width: 6px; border: solid #fff; border-width: 0 0 0 2px; }
.hthumb { flex: none; width: 20px; border: 1px solid #fff; border-right-color: #000; border-bottom: 0; }
.track { flex: 1; background: #ccc; }
.end { width: 18px; background: linear-gradient(90deg, #000 4px, #c0c0c0 4px); }

svg text { text-anchor: middle; font-family: "DejaVu Sans", sans-serif; font-weight: bold; }
.t-pdf { font-size: 6px; }
svg .t-abc { font-size: 9px; font-family: "Liberation Sans", sans-serif; }
.t-sort { font-size: 8px; fill: #204a87; }
.pale { fill: #5b8ac4; }
.t-help { font-size: 16px; fill: #fff; }
.t-pct { font-size: 13px; }
svg .t-num { text-anchor: start; font: 9px "Liberation Sans", sans-serif; }
```
